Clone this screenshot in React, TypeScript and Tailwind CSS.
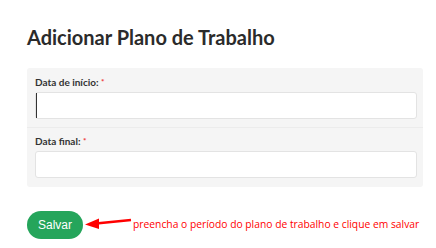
export default function App() {
  return (
    <div className="w-[436px] h-[248px] bg-white overflow-hidden pl-[27px] pr-[13px] pt-[24px] font-['Lato',sans-serif]">
      {/* Title */}
      <h1 className="text-[20px] leading-[26px] font-bold text-[#2b2b2b]">
        Adicionar Plano de Trabalho
      </h1>

      {/* Form panel */}
      <div className="mt-[18px] bg-[#f5f5f5] rounded-[3px]">
        <div className="pl-2 pr-[6px] pt-[8px] pb-[8px] border-b border-[#ececec]">
          <label className="block text-[10px] leading-[12px] font-bold text-[#333]">
            Data de início: <span className="text-[#e33] text-[8px] align-top">*</span>
          </label>
          <div className="mt-[4px] h-[27px] bg-white border border-[#e3e3e3] rounded-[3px] relative">
            <div className="absolute left-0 top-0 bottom-0 w-px bg-[#333]" />
          </div>
        </div>
        <div className="pl-2 pr-[6px] pt-[7px] pb-[9px]">
          <label className="block text-[10px] leading-[12px] font-bold text-[#333]">
            Data final: <span className="text-[#e33] text-[8px] align-top">*</span>
          </label>
          <div className="mt-[4px] h-[27px] bg-white border border-[#e3e3e3] rounded-[3px]" />
        </div>
      </div>

      {/* Action row */}
      <div className="mt-[24px] flex items-center">
        <button className="w-[56px] h-[28px] shrink-0 rounded-full bg-[#25a55b] text-white text-[12px] font-['Liberation_Sans',sans-serif]">
          Salvar
        </button>
        <svg width="48" height="14" viewBox="0 0 48 14" className="shrink-0 ml-[1px] -mt-[4px]">
          <line x1="12" y1="7.5" x2="47" y2="4" stroke="#f00" strokeWidth="2.5" />
          <polygon points="1,8.5 15,2.5 15,13" fill="#f00" />
        </svg>
        <span className="ml-[1px] -mt-[1px] whitespace-nowrap text-[10.3px] text-[#f00] font-['Open_Sans',sans-serif]">
          preencha o período do plano de trabalho e clique em salvar
        </span>
      </div>
    </div>
  );
}
